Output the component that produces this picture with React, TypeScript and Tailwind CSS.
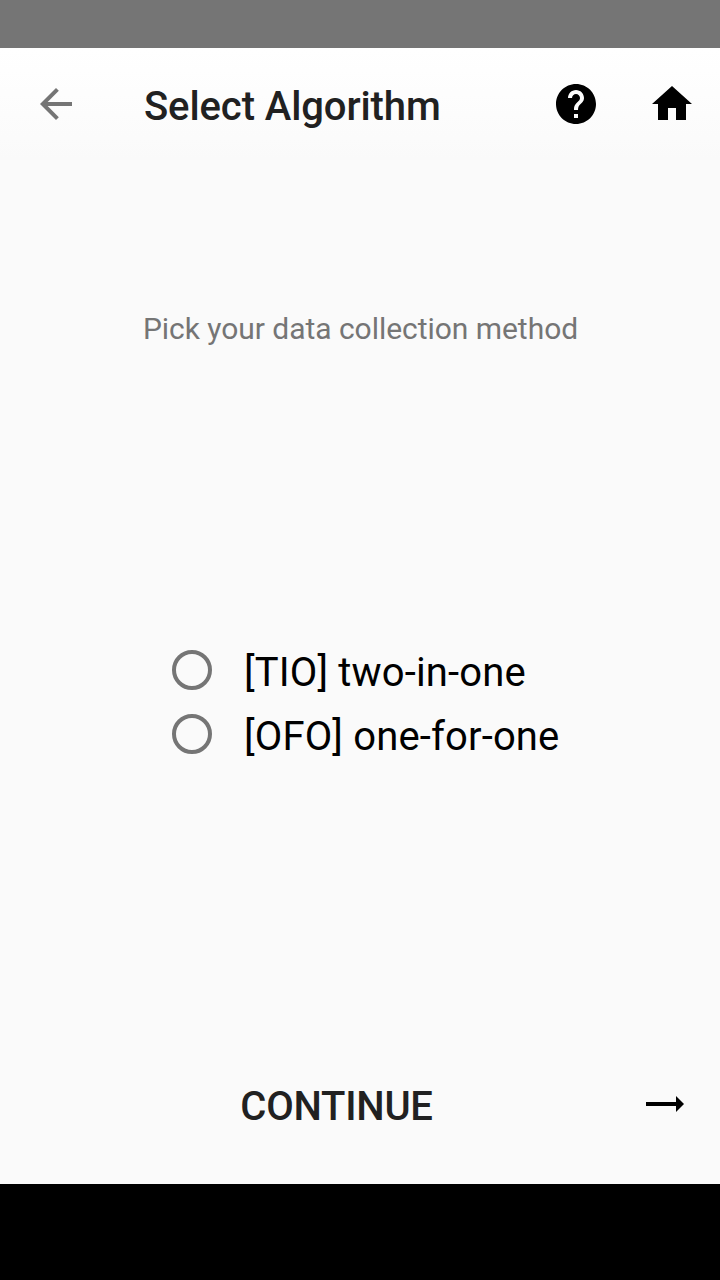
const methods = ["[TIO] two-in-one", "[OFO] one-for-one"];

export default function App() {
  return (
    <div className="flex h-[1280px] w-[720px] flex-col overflow-hidden bg-[#fafafa] font-['Roboto',sans-serif]">
      <div className="h-12 shrink-0 bg-[#757575]" />
      <header className="flex h-28 shrink-0 items-center bg-linear-to-b from-white to-[#fafafa] pl-8">
        <button aria-label="Back" className="size-12 text-[#757575]">
          <svg viewBox="0 0 24 24" className="size-12" fill="currentColor">
            <path d="M20 11H7.83l5.59-5.59L12 4l-8 8 8 8 1.41-1.41L7.83 13H20v-2z" />
          </svg>
        </button>
        <h1 className="ml-16 w-[408px] pt-1.5 text-[40px] leading-[48px] font-medium tracking-[-0.1px] whitespace-nowrap text-[#212121]">Select Algorithm</h1>
        <button aria-label="Help" className="size-12">
          <svg viewBox="0 0 24 24" className="size-12" fill="black">
            <path d="M12 2C6.48 2 2 6.48 2 12s4.48 10 10 10 10-4.48 10-10S17.52 2 12 2zm1 17h-2v-2h2v2zm2.07-7.75l-.9.92C13.45 12.9 13 13.5 13 15h-2v-.5c0-1.1.45-2.1 1.17-2.83l1.24-1.26c.37-.36.59-.86.59-1.41 0-1.1-.9-2-2-2s-2 .9-2 2H8c0-2.21 1.79-4 4-4s4 1.79 4 4c0 .88-.36 1.68-.93 2.25z" />
          </svg>
        </button>
        <button aria-label="Home" className="ml-12 size-12">
          <svg viewBox="0 0 24 24" className="size-12" fill="black">
            <path d="M10 20v-6h4v6h5v-8h3L12 3 2 12h3v8z" />
          </svg>
        </button>
      </header>
      <main className="flex flex-1 flex-col">
        <p className="mt-[151px] pl-px text-center text-[30px] leading-9 tracking-[-0.04px] text-[#757575]">Pick your data collection method</p>
        <div className="mt-[291px] ml-40 flex flex-col">
          {methods.map((label) => (
            <label key={label} className="flex h-16 items-center text-[40px] leading-[48px] whitespace-nowrap text-black">
              <input type="radio" name="method" className="ml-3 size-10 appearance-none rounded-full border-4 border-[#757575] checked:border-[12px]" />
              <span className="ml-8 pt-1.5 tracking-[0.15px]">{label}</span>
            </label>
          ))}
        </div>
      </main>
      <button className="flex h-40 shrink-0 items-center bg-[#fafafa] pr-8 text-[40px] font-medium text-[#212121]">
        <span className="w-[673px] pt-1.5 text-center leading-[48px] tracking-[-0.25px]">CONTINUE</span>
        <svg viewBox="0 0 40 20" className="-ml-[29px] h-5 w-10 shrink-0" fill="black">
          <path d="M2 8H32V2L40 10L32 18V12H2Z" />
        </svg>
      </button>
      <div className="h-24 shrink-0 bg-black" />
    </div>
  );
}
